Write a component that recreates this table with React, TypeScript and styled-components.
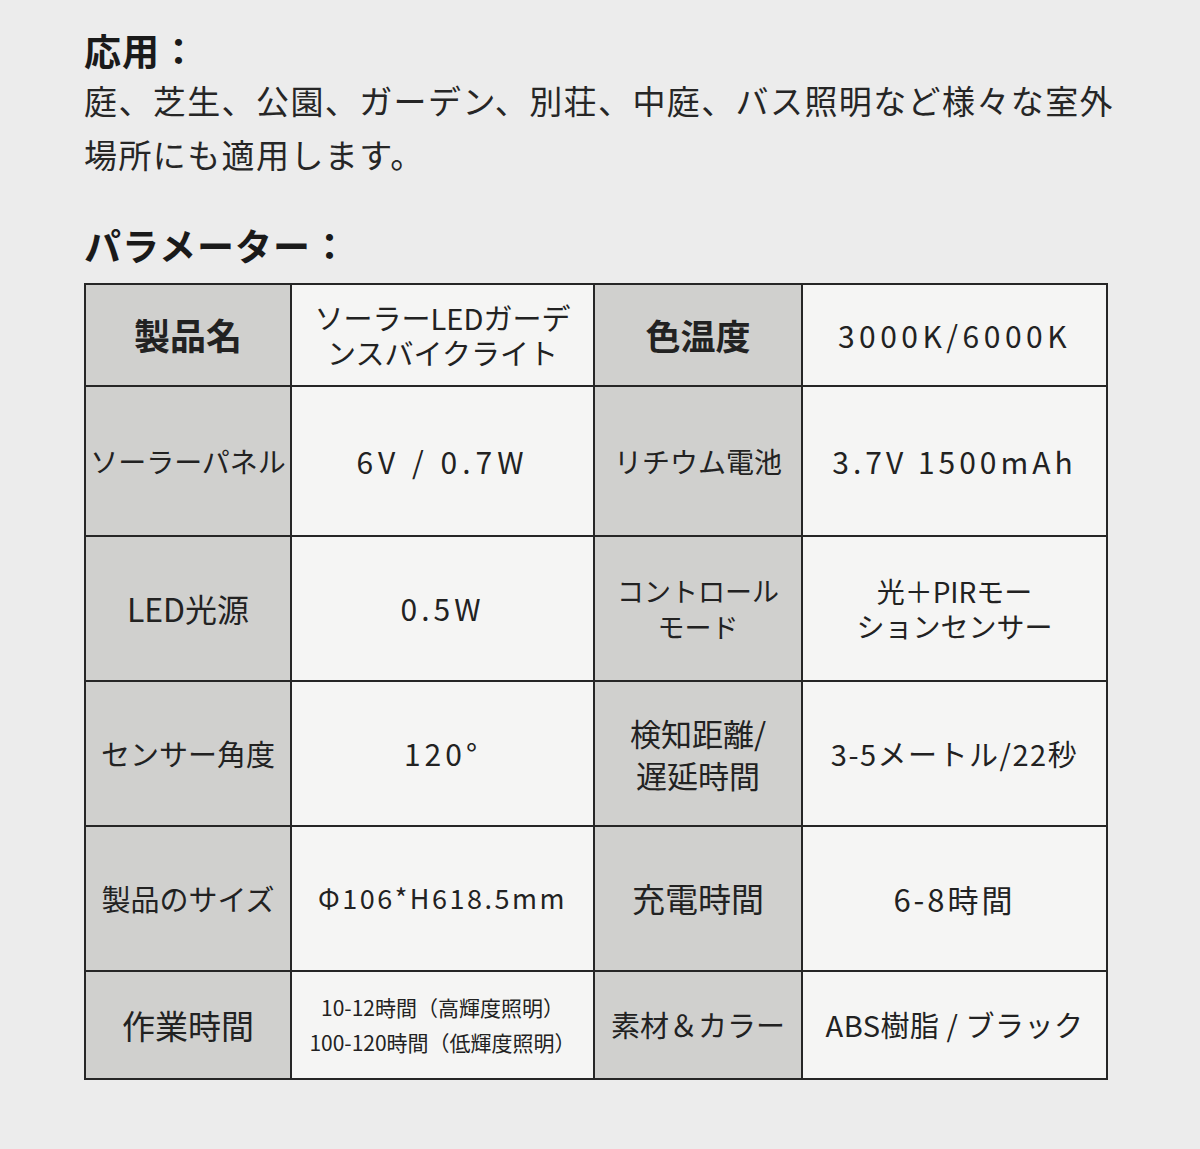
import { Fragment } from 'react';
import styled, { createGlobalStyle } from 'styled-components';

const GlobalStyle = createGlobalStyle`
  html, body {
    margin: 0;
    padding: 0;
    background: #ececec;
  }
  body {
    font-family: "Noto Sans CJK JP", "Noto Sans", sans-serif;
    color: #1e1e1e;
  }
`;

const Page = styled.div`
  width: 1200px;
  height: 1149px;
  box-sizing: border-box;
  padding: 24px 0 0 84px;
  background: #ececec;
`;

const Heading = styled.h2`
  margin: 0;
  font-size: 37px;
  font-weight: 700;
  line-height: 52px;
  letter-spacing: 1px;
  color: #1a1a1a;
`;

const Body = styled.p`
  margin: -3px 0 0;
  font-size: 33px;
  line-height: 54px;
  font-weight: 400;
  letter-spacing: 1.4px;
  color: #262626;
`;

const SectionGap = styled.div`
  height: 38px;
`;

const Table = styled.div`
  display: grid;
  grid-template-columns: 204px 301px 206px 303px;
  grid-template-rows: 100px 148px 143px 143px 143px 106px;
  gap: 2px;
  padding: 2px;
  width: max-content;
  margin-top: 12px;
  background: #262626;
`;

const Cell = styled.div<{ $shade?: boolean; $bold?: boolean; $size?: number; $spacing?: number; $lh?: number }>`
  display: flex;
  align-items: center;
  justify-content: center;
  text-align: center;
  background: ${(p) => (p.$shade ? '#d0d0ce' : '#f5f5f4')};
  font-size: ${(p) => p.$size ?? 29}px;
  font-weight: ${(p) => (p.$bold ? 700 : 400)};
  letter-spacing: ${(p) => p.$spacing ?? 0}px;
  line-height: ${(p) => p.$lh ?? 1.22};
  color: #222;
  white-space: pre-line;
`;

type CellSpec = {
  text: string;
  size?: number;
  spacing?: number;
  bold?: boolean;
  lh?: number;
};

const rows: CellSpec[][] = [
  [
    { text: '製品名', size: 36, bold: true },
    { text: 'ソーラーLEDガーデ\nンスバイクライト', size: 29 },
    { text: '色温度', size: 35, bold: true },
    { text: '3000K/6000K', size: 30, spacing: 4.5 },
  ],
  [
    { text: 'ソーラーパネル', size: 28 },
    { text: '6V / 0.7W', size: 30, spacing: 5 },
    { text: 'リチウム電池', size: 28 },
    { text: '3.7V 1500mAh', size: 30, spacing: 4 },
  ],
  [
    { text: 'LED光源', size: 32 },
    { text: '0.5W', size: 30, spacing: 4 },
    { text: 'コントロール\nモード', size: 27, lh: 1.3 },
    { text: '光＋PIRモー\nションセンサー', size: 28 },
  ],
  [
    { text: 'センサー角度', size: 29 },
    { text: '120°', size: 30, spacing: 4 },
    { text: '検知距離/\n遅延時間', size: 31, lh: 1.35 },
    { text: '3-5メートル/22秒', size: 29, spacing: 1.5 },
  ],
  [
    { text: '製品のサイズ', size: 29 },
    { text: 'Φ106*H618.5mm', size: 27, spacing: 2.5 },
    { text: '充電時間', size: 33 },
    { text: '6-8時間', size: 31, spacing: 3 },
  ],
  [
    { text: '作業時間', size: 33 },
    { text: '10-12時間（高輝度照明）\n100-120時間（低輝度照明）', size: 21, lh: 1.65 },
    { text: '素材＆カラー', size: 29 },
    { text: 'ABS樹脂 / ブラック', size: 29, spacing: 0.5 },
  ],
];

export default function App(): JSX.Element {
  return (
    <>
      <GlobalStyle />
      <Page>
        <Heading>応用：</Heading>
        <Body>
          庭、芝生、公園、ガーデン、別荘、中庭、バス照明など様々な室外
          <br />
          場所にも適用します。
        </Body>
        <SectionGap />
        <Heading>パラメーター：</Heading>
        <Table>
          {rows.map((row, i) => (
            <Fragment key={i}>
              {row.map((c, j) => (
                <Cell
                  key={j}
                  $shade={j % 2 === 0}
                  $bold={c.bold}
                  $size={c.size}
                  $spacing={c.spacing}
                  $lh={c.lh}
                >
                  {c.text}
                </Cell>
              ))}
            </Fragment>
          ))}
        </Table>
      </Page>
    </>
  );
}
